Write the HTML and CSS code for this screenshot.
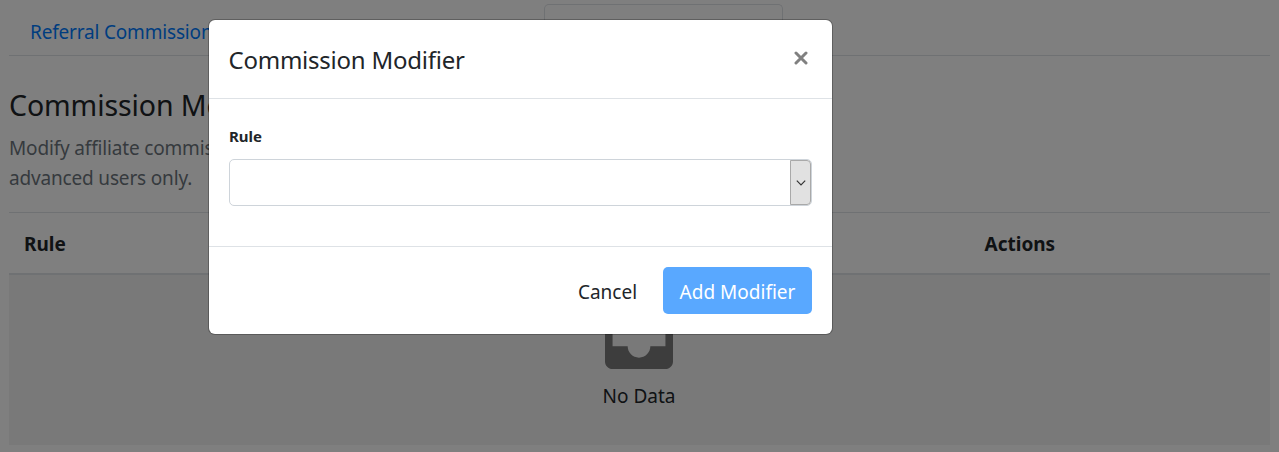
FILE: index.html
```html
<!DOCTYPE html>
<html lang="en">
<head>
<meta charset="utf-8">
<title>Commission Modifiers</title>
<link rel="stylesheet" href="styles.css">
</head>
<body>
<main class="page">
  <nav class="tabs">
    <a class="tab">Referral Commissions</a>
    <a class="tab tab-active"></a>
  </nav>
  <h1 class="page-title">Commission Modifiers</h1>
  <p class="intro">Modify affiliate commissions,<br>advanced users only.</p>
  <div class="table">
    <div class="table-head"><span class="th-rule">Rule</span><span class="th-actions">Actions</span></div>
    <div class="empty">
      <svg class="inbox" viewBox="3 3 18 18"><path fill="#7a7a7a" d="M19 3H5c-1.100 0-2 .9-2 2v14c0 1.100.9 2 2 2h14c1.100 0 2-.9 2-2V5c0-1.100-.9-2-2-2zm0 12h-4c0 1.660-1.350 3-3 3s-3-1.340-3-3H5V5h14v10z"/></svg>
      <span class="empty-text">No Data</span>
    </div>
  </div>
</main>
<div class="backdrop">
  <section class="modal">
    <header class="modal-header">
      <h2 class="modal-title">Commission Modifier</h2>
      <svg class="close" viewBox="0 0 14 14"><path d="M2 2L12 12M12 2L2 12" fill="none" stroke="#808080" stroke-width="3" stroke-linecap="round"/></svg>
    </header>
    <div class="modal-body">
      <label class="label">Rule</label>
      <div class="select"><span class="select-arrow"><svg class="chevron" viewBox="0 0 10 6"><path d="M.8.7L5 4.900L9.200.7" fill="none" stroke="#333" stroke-width="1.200"/></svg></span></div>
    </div>
    <footer class="modal-footer">
      <button class="btn cancel">Cancel</button>
      <button class="btn primary">Add Modifier</button>
    </footer>
  </section>
</div>
</body>
</html>
```
FILE: styles.css
```css
* { box-sizing: border-box; }
body { margin: 0; height: 452px; overflow: hidden; background: #fff; color: #212529; font: 19px/30px "Segoe UI", "Noto Sans", "Open Sans", sans-serif; }
.page { padding: 4px 9px 0; }
.tabs { display: flex; height: 52px; border-bottom: 1px solid #dee2e6; }
.tab { width: 535px; padding: 13px 21px; color: #007bff; letter-spacing: -.18px; }
.tab-active { width: 239px; background: #fff; border: 1px solid #dee2e6; border-bottom: 0; border-radius: 5px 5px 0 0; }
.page-title { margin: 31px 0 10px; font-size: 28.500px; font-weight: 400; line-height: 36px; letter-spacing: -.1px; }
.intro { margin: 0 0 19px; color: #6c757d; letter-spacing: -.17px; }
.table-head { display: flex; height: 63px; padding: 16px 15px; border-top: 1px solid #dee2e6; border-bottom: 2px solid #dee2e6; font-weight: 700; line-height: 30px; }
.th-rule { width: 960.500px; }
.empty { display: flex; flex-direction: column; align-items: center; height: 170px; padding: 26px 2px 0 0; background: #f2f2f2; }
.inbox { width: 68px; height: 68px; margin-bottom: 12px; }
.empty-text { padding-left: 1px; }
.backdrop { position: absolute; inset: 0; padding: 20px 0 0 209px; background: rgba(0,0,0,.5); }
.modal { width: 623px; height: 314px; background: #fff; border-radius: 6px; box-shadow: 0 0 0 1px rgba(0,0,0,.25); }
.modal-header { display: flex; justify-content: space-between; height: 79px; padding: 21px 24px 20px 19.500px; border-bottom: 1px solid #dee2e6; }
.modal-title { margin: 0; font-size: 24px; font-weight: 400; line-height: 38px; letter-spacing: -.24px; }
.close { width: 14px; height: 14px; margin-top: 10px; }
.modal-body { height: 147px; padding: 25px 20px 0; }
.label { display: block; height: 35px; font-size: 15px; font-weight: 700; line-height: 24px; }
.select { display: flex; justify-content: flex-end; height: 47px; border: 1px solid #ced4da; border-radius: 5px; }
.select-arrow { display: flex; align-items: center; justify-content: center; width: 21px; background: #e1e1e1; border: 1px solid #a9a9a9; border-radius: 0 4px 4px 0; }
.chevron { width: 10px; height: 6px; }
.modal-footer { display: flex; justify-content: flex-end; gap: 10px; height: 88px; padding: 20px; border-top: 1px solid #dee2e6; }
.btn { height: 47px; padding: 2px 0 0; border: 0; border-radius: 5px; background: none; color: #212529; font: inherit; line-height: 46px; }
.cancel { width: 91px; }
.primary { width: 149px; background: #59a8ff; color: #fff; }
```
